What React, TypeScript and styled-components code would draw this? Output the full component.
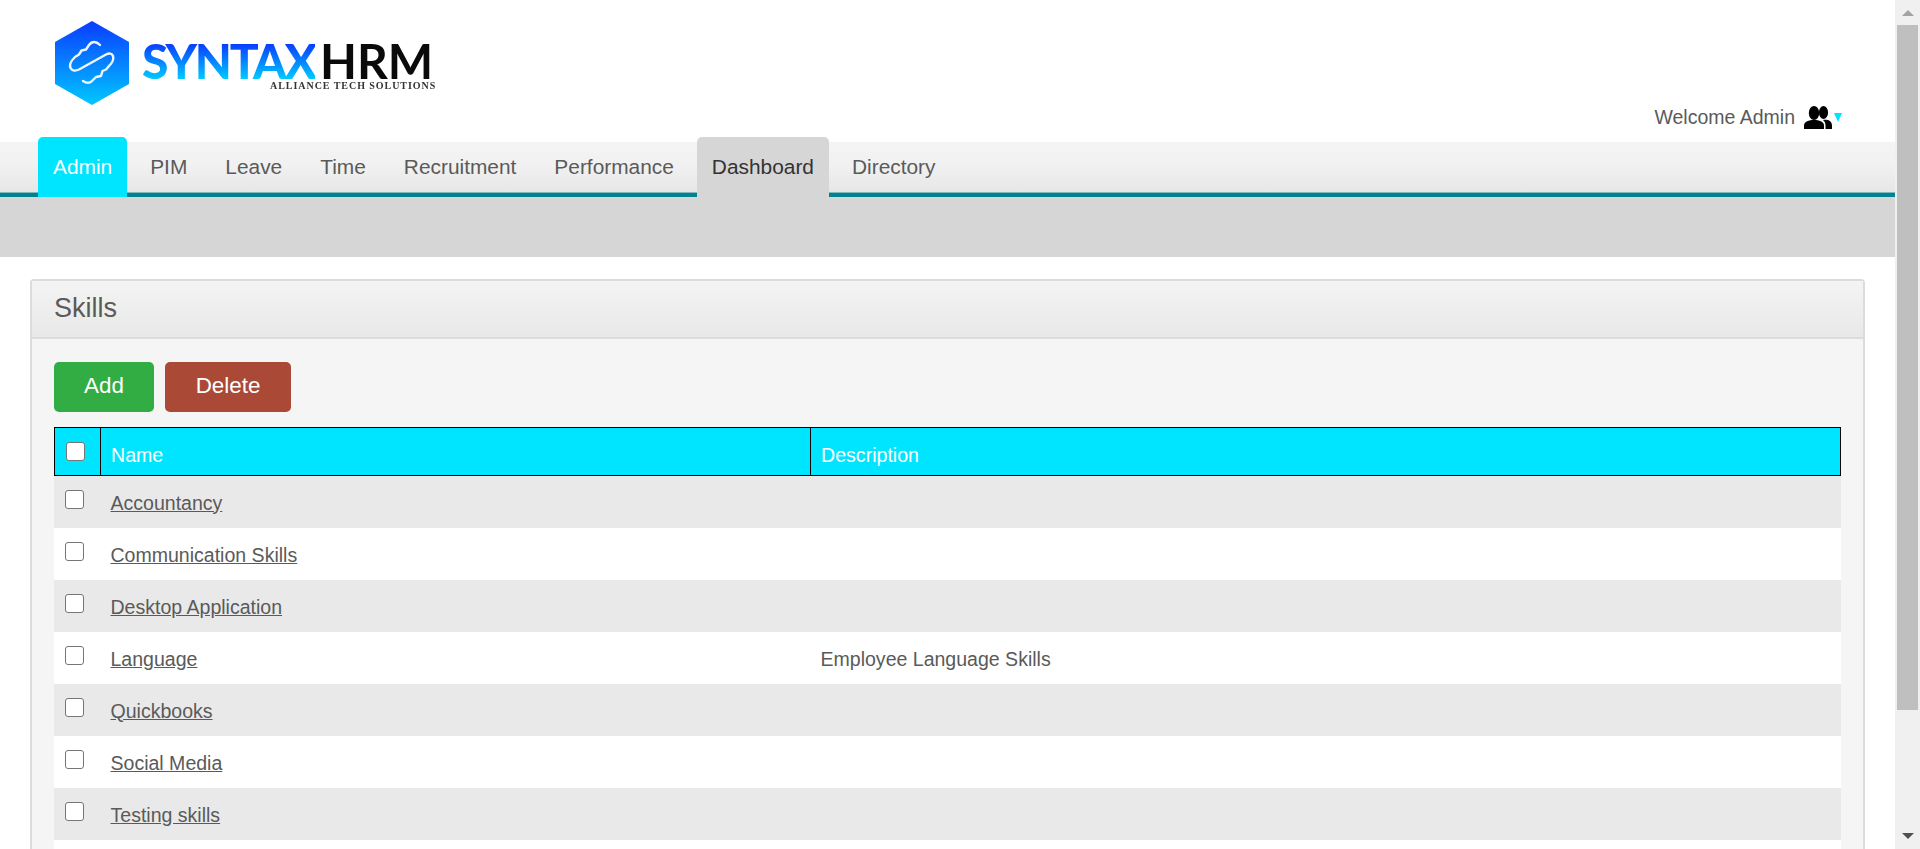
import React from "react";
import styled, { createGlobalStyle } from "styled-components";

const Global = createGlobalStyle`
  html, body { height: 100%; }
  body { margin: 0; background: #fff; font-family: "Liberation Sans", Arial, sans-serif; font-size: 20px; color: #5a5a5a; }
  * { box-sizing: border-box; }
`;

const Shell = styled.div`
  display: flex;
  height: 100vh;
`;

const Main = styled.main`
  flex: 1;
  min-width: 0;
  overflow: hidden;
`;

const Page = styled.div`
  display: flex;
  flex-direction: column;
  height: 990px;
`;

const Rail = styled.div`
  width: 25px;
  flex: none;
  display: flex;
  flex-direction: column;
  background: #f0f0f0;
`;

const RailButton = styled.div`
  height: 25px;
  flex: none;
`;

const RailThumb = styled.div`
  height: 685px;
  margin: 0 2px;
  background: #bfbfbf;
`;

const RailSpace = styled.div`
  flex: 1;
`;

const Header = styled.header`
  height: 142px;
  flex: none;
  display: flex;
  justify-content: space-between;
  align-items: flex-start;
  padding: 21px 53px 0 55px;
`;

const Logo = styled.div`
  display: flex;
  align-items: flex-start;
  gap: 13px;
  filter: blur(0.4px);
`;

const LogoWords = styled.div`
  display: flex;
  flex-direction: column;
  align-items: flex-end;
  padding-top: 20px;
`;

const LogoName = styled.div`
  display: flex;
  align-items: baseline;
  font-family: Lato, sans-serif;
  font-size: 48px;
  line-height: 40px;
  gap: 5px;
`;

const LogoSyntax = styled.span`
  font-weight: 900;
  letter-spacing: -2.2px;
  background: linear-gradient(180deg, #0a3cff 7%, #00c8ff 93%);
  -webkit-background-clip: text;
  background-clip: text;
  color: transparent;
`;

const LogoHrm = styled.span`
  font-weight: 700;
  color: #0a0a0a;
`;

const LogoTag = styled.div`
  font-family: "Liberation Serif", serif;
  font-weight: 700;
  font-size: 10px;
  line-height: 10px;
  letter-spacing: 0.95px;
  white-space: nowrap;
  color: #333;
  margin-right: -3px;
`;

const Welcome = styled.div`
  display: flex;
  align-items: center;
  margin-top: 83px;
  height: 26px;
  font-size: 19.5px;
  color: #5a5a5a;
`;

const UserIcon = styled.svg`
  width: 28px;
  height: 23px;
  margin-left: 9px;
  fill: #000;
`;

const Caret = styled.span`
  width: 0;
  height: 0;
  margin-left: 2px;
  border-left: 4.5px solid transparent;
  border-right: 4.5px solid transparent;
  border-top: 9px solid #00e5ff;
`;

const Nav = styled.nav`
  height: 55px;
  flex: none;
  display: flex;
  gap: 8px;
  padding: 0 38px;
  background: linear-gradient(180deg, #f4f4f4 0%, #f1f1f1 45%, #e6e6e6 100%);
  border-bottom: 4px solid #00838f;
  box-shadow: 0 -1px 0 #7fb9bf inset;
`;

const Tab = styled.a<{ $state?: "active" | "current" }>`
  height: 60px;
  margin-top: -5px;
  padding: 0 15px;
  display: flex;
  align-items: center;
  font-size: 20.88px;
  border-radius: 5px 5px 0 0;
  color: ${(p) => (p.$state === "active" ? "#fff" : p.$state === "current" ? "#333" : "#5a5a5a")};
  background: ${(p) => (p.$state === "active" ? "#00e5ff" : p.$state === "current" ? "#d6d6d6" : "transparent")};
`;

const SubBar = styled.div`
  height: 60px;
  flex: none;
  background: #d6d6d6;
`;

const Panel = styled.section`
  margin: 22px 30px 0;
  border: 2px solid #dcdcdc;
  border-radius: 4px;
  background: #f5f5f5;
`;

const PanelHead = styled.div`
  height: 58px;
  padding: 0 22px 2px;
  display: flex;
  align-items: center;
  font-size: 27px;
  color: #5a5a5a;
  background: linear-gradient(180deg, #f4f4f4 0%, #e8e8e8 100%);
  border-bottom: 2px solid #dcdcdc;
`;

const PanelBody = styled.div`
  padding: 23px 22px 30px;
`;

const Actions = styled.div`
  display: flex;
  gap: 11px;
  margin-bottom: 15px;
`;

const ActionButton = styled.button<{ $bg: string; $w: number }>`
  width: ${(p) => p.$w}px;
  height: 50px;
  padding: 0 0 2px;
  border: 0;
  border-radius: 5px;
  font: 400 22.4px "Liberation Sans", Arial, sans-serif;
  color: #fff;
  background: ${(p) => p.$bg};
`;

const Table = styled.table`
  width: 1787px;
  table-layout: fixed;
  border-collapse: separate;
  border-spacing: 0;
`;

const HeadRow = styled.tr`
  height: 49px;
  background: #00e5ff;
`;

const HeadCell = styled.th<{ $w?: number }>`
  ${(p) => (p.$w ? `width: ${p.$w}px;` : "")}
  border-top: 1px solid #000;
  border-bottom: 1px solid #000;
  border-right: 1px solid #000;
  padding: 7px 10px 0 10px;
  text-align: left;
  font-weight: 400;
  font-size: 19.6px;
  color: #fff;
`;

const CheckHeadCell = styled(HeadCell)`
  border-left: 1px solid #000;
  padding: 0 0 0 11px;
`;

const Row = styled.tr<{ $odd: boolean }>`
  height: 52px;
  background: ${(p) => (p.$odd ? "#e9e9e9" : "#fff")};
`;

const Cell = styled.td`
  padding: 2px 10px 0 9.5px;
  font-size: 19.55px;
  color: #5a5a5a;
`;

const CheckCell = styled.td`
  padding: 0 0 6px 11px;
`;

const Check = styled.input.attrs({ type: "checkbox" })`
  appearance: none;
  display: block;
  width: 19px;
  height: 19px;
  margin: 0;
  background: #fff;
  border: 1px solid #767676;
  border-radius: 3px;
`;

const SkillLink = styled.a`
  color: #5a5a5a;
  text-decoration: underline;
`;

const skills: [string, string][] = [
  ["Accountancy", ""],
  ["Communication Skills", ""],
  ["Desktop Application", ""],
  ["Language", "Employee Language Skills"],
  ["Quickbooks", ""],
  ["Social Media", ""],
  ["Testing skills", ""],
];

const tabs = ["Admin", "PIM", "Leave", "Time", "Recruitment", "Performance", "Dashboard", "Directory"];

const LogoMark = () => (
  <svg width="74" height="84" viewBox="0 0 74 84">
    <defs>
      <linearGradient id="hex" x1="0" y1="0" x2="0" y2="1">
        <stop offset="0" stopColor="#0a3cff" />
        <stop offset="1" stopColor="#00c8ff" />
      </linearGradient>
    </defs>
    <path d="M37 0L74 21V63L37 84L0 63V21Z" fill="url(#hex)" />
    <path
      d="M45 24C41 20 37 20 34 24L31 28.5 26.5 29.5 24 33.5 20 36C16 40 14 44 15.5 47C17 50 21 50 24 48.5L51 33.5C54 32 57 32 58 35C59 38 57 42 54 45L51 48.5 47.5 50 46 55 41 56 37 60C34 63 31 62 28 60"
      fill="none"
      stroke="#eef6ff"
      strokeWidth="2.4"
      strokeLinecap="round"
      strokeLinejoin="round"
    />
  </svg>
);

export default function App() {
  return (
    <Shell>
      <Global />
      <Main>
        <Page>
          <Header>
            <Logo>
              <LogoMark />
              <LogoWords>
                <LogoName>
                  <LogoSyntax>SYNTAX</LogoSyntax>
                  <LogoHrm>HRM</LogoHrm>
                </LogoName>
                <LogoTag>ALLIANCE TECH SOLUTIONS</LogoTag>
              </LogoWords>
            </Logo>
            <Welcome>
              Welcome Admin
              <UserIcon viewBox="0 0 28 23">
                <ellipse cx="10" cy="7" rx="5.2" ry="7" />
                <ellipse cx="19.5" cy="6.5" rx="4.6" ry="6.5" />
                <path d="M0 23v-3.5C0 15.5 5 14 10 14s10 1.5 10 5.5V23z" />
                <path d="M21.5 23v-3.5c0-2.3-.9-4-2.6-5.4.8-.2 1.6-.3 2.6-.3 3.5 0 6.5 2 6.5 5.7V23z" />
              </UserIcon>
              <Caret />
            </Welcome>
          </Header>
          <Nav>
            {tabs.map((t) => (
              <Tab key={t} $state={t === "Admin" ? "active" : t === "Dashboard" ? "current" : undefined}>
                {t}
              </Tab>
            ))}
          </Nav>
          <SubBar />
          <Panel>
            <PanelHead>Skills</PanelHead>
            <PanelBody>
              <Actions>
                <ActionButton $bg="#32ad44" $w={100}>Add</ActionButton>
                <ActionButton $bg="#aa4a36" $w={126}>Delete</ActionButton>
              </Actions>
              <Table>
                <thead>
                  <HeadRow>
                    <CheckHeadCell $w={47}><Check /></CheckHeadCell>
                    <HeadCell $w={710}>Name</HeadCell>
                    <HeadCell>Description</HeadCell>
                  </HeadRow>
                </thead>
                <tbody>
                  {skills.map(([name, desc], i) => (
                    <Row key={name} $odd={i % 2 === 0}>
                      <CheckCell><Check /></CheckCell>
                      <Cell><SkillLink>{name}</SkillLink></Cell>
                      <Cell>{desc}</Cell>
                    </Row>
                  ))}
                  <Row $odd={false}>
                    <CheckCell />
                    <Cell />
                    <Cell />
                  </Row>
                </tbody>
              </Table>
            </PanelBody>
          </Panel>
        </Page>
      </Main>
      <Rail>
        <RailButton>
          <svg width="25" height="25" viewBox="0 0 25 25"><path d="M13 10l6 6H7z" fill="#a3a3a3" /></svg>
        </RailButton>
        <RailThumb />
        <RailSpace />
        <RailButton>
          <svg width="25" height="25" viewBox="0 0 25 25"><path d="M13 15l-6-6h12z" fill="#505050" /></svg>
        </RailButton>
      </Rail>
    </Shell>
  );
}
